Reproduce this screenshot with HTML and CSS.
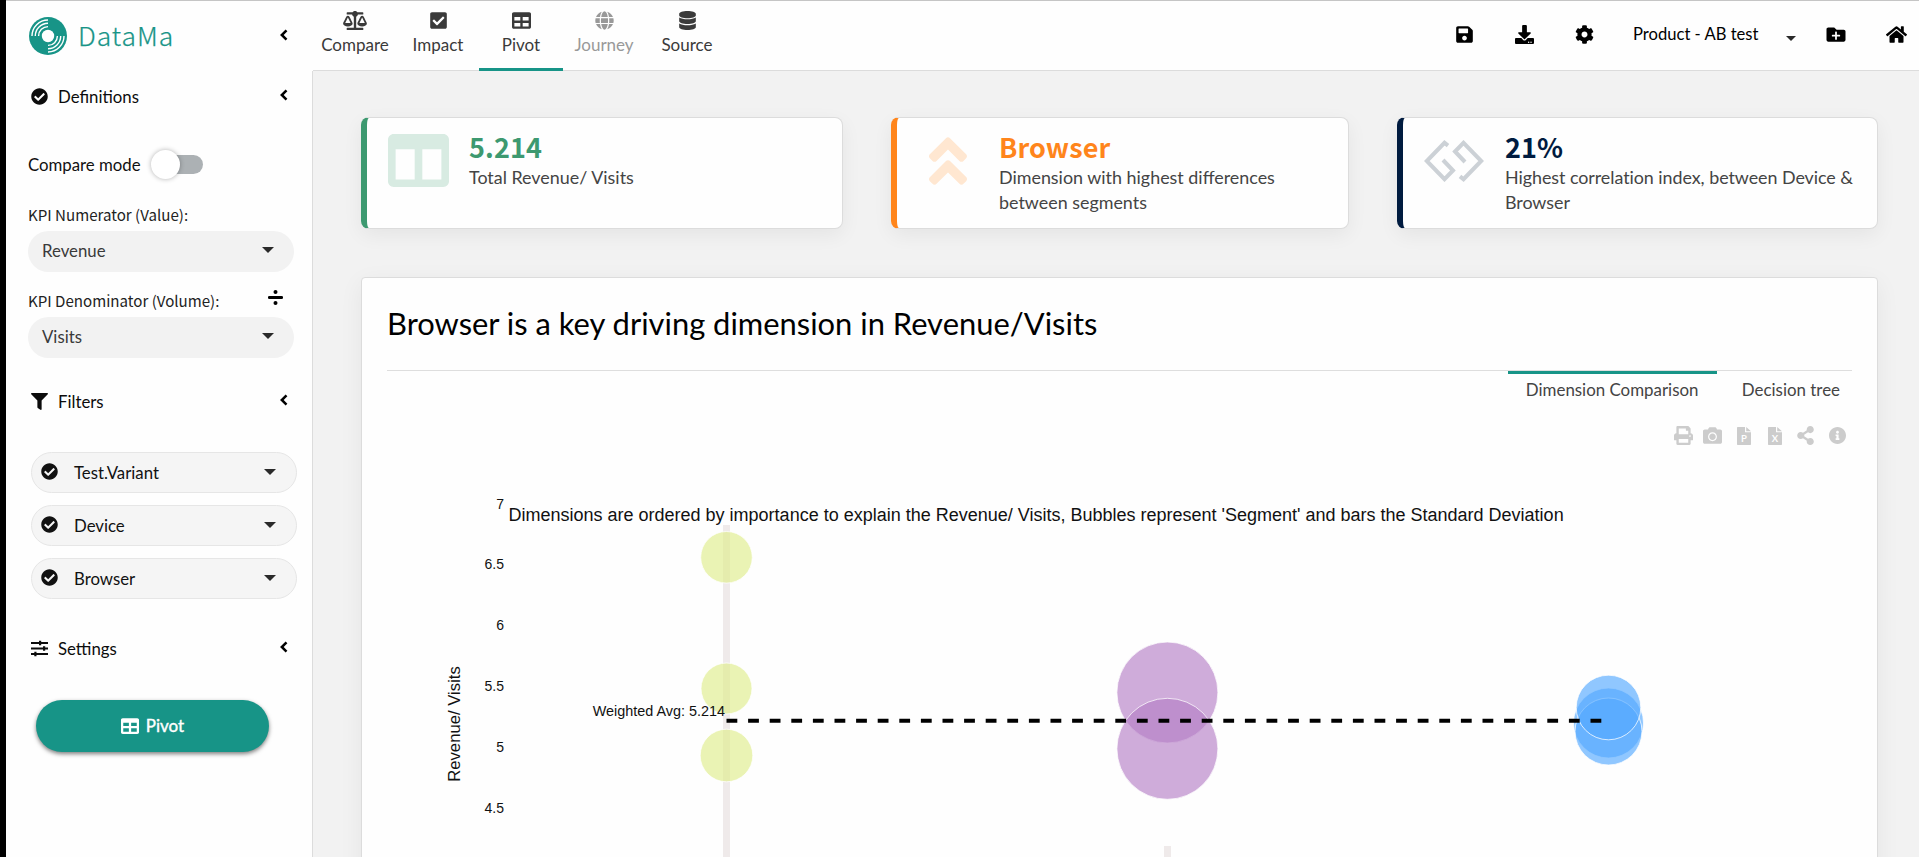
FILE: index.html
```html
<!DOCTYPE html>
<html lang="en">
<head>
<meta charset="utf-8">
<title>DataMa - Pivot</title>
<link rel="stylesheet" href="styles.css">
</head>
<body>
<svg class="sprite" aria-hidden="true">
  <symbol id="check" viewBox="0 0 512 512"><path d="M504 256c0 136.967-111.033 248-248 248S8 392.967 8 256 119.033 8 256 8s248 111.033 248 248zM227.314 387.314l184-184c6.248-6.248 6.248-16.379 0-22.627l-22.627-22.627c-6.248-6.249-16.379-6.249-22.628 0L216 308.118l-70.059-70.059c-6.248-6.248-16.379-6.248-22.628 0l-22.627 22.627c-6.248 6.248-6.248 16.379 0 22.627l104 104c6.249 6.249 16.379 6.249 22.628.001z"/></symbol>
  <symbol id="table" viewBox="0 0 512 512"><path d="M464 32H48C21.49 32 0 53.49 0 80v352c0 26.51 21.49 48 48 48h416c26.51 0 48-21.49 48-48V80c0-26.51-21.49-48-48-48zM224 416H64v-96h160v96zm0-160H64v-96h160v96zm224 160H288v-96h160v96zm0-160H288v-96h160v96z"/></symbol>
  <symbol id="chevron" viewBox="0 0 8 12"><path d="M6.5 1.3L1.8 6l4.7 4.7" fill="none" stroke="currentColor" stroke-width="2.5"/></symbol>
  <symbol id="caret" viewBox="0 0 12 6"><path d="M0 0h12L6 6z"/></symbol>
</svg>

<div class="app">
  <aside class="sidebar">
    <div class="brand">
      <svg class="logo" viewBox="0 0 38 38">
        <circle cx="19" cy="19" r="19" fill="#179487"/>
        <circle cx="19" cy="19" r="6.2" fill="#fff"/>
        <g fill="none" stroke="#fff" stroke-width="1.4">
          <path d="M9.6 19A9.4 9.4 0 0 1 19 9.6M6.3 19A12.7 12.7 0 0 1 19 6.3M3 19A16 16 0 0 1 19 3"/>
          <path d="M28.4 19A9.4 9.4 0 0 1 19 28.4M31.7 19A12.7 12.7 0 0 1 19 31.7M35 19A16 16 0 0 1 19 35"/>
        </g>
      </svg>
      <span class="brand-name">DataMa</span>
      <svg class="chev"><use href="#chevron"/></svg>
    </div>

    <div class="section definitions">
      <svg class="ico"><use href="#check"/></svg><span>Definitions</span>
      <svg class="chev"><use href="#chevron"/></svg>
    </div>
    <div class="switch-row"><span>Compare mode</span><span class="switch"><i class="knob"></i></span></div>
    <div class="label">KPI Numerator (Value):</div>
    <div class="select"><span>Revenue</span><svg class="caret"><use href="#caret"/></svg></div>
    <div class="label second"><span>KPI Denominator (Volume):</span>
      <svg class="divide" viewBox="0 0 15 15"><rect y="6" width="15" height="3" rx="1.3"/><circle cx="7.5" cy="2" r="2"/><circle cx="7.5" cy="13" r="2"/></svg>
    </div>
    <div class="select"><span>Visits</span><svg class="caret"><use href="#caret"/></svg></div>

    <div class="section filters">
      <svg class="ico" viewBox="0 0 512 512"><path d="M487.976 0H24.028C2.71 0-8.047 25.866 7.058 40.971L192 225.941V432c0 7.831 3.821 15.17 10.237 19.662l80 55.98C298.02 518.69 320 507.493 320 487.98V225.941l184.947-184.97C520.021 25.896 509.338 0 487.976 0z"/></svg><span>Filters</span>
      <svg class="chev"><use href="#chevron"/></svg>
    </div>
    <div class="pills">
      <div class="pill"><svg class="ico"><use href="#check"/></svg><span>Test.Variant</span><svg class="caret"><use href="#caret"/></svg></div>
      <div class="pill"><svg class="ico"><use href="#check"/></svg><span>Device</span><svg class="caret"><use href="#caret"/></svg></div>
      <div class="pill"><svg class="ico"><use href="#check"/></svg><span>Browser</span><svg class="caret"><use href="#caret"/></svg></div>
    </div>

    <div class="section settings">
      <svg class="ico" viewBox="0 0 17 17"><path d="M0 2h17v2H0zM0 7.5h17v2H0zM0 13h17v2H0zM8 .8h2.2v4.4H8zM12 6.3h2.2v4.4H12zM3.3 11.8h2.2v4.4H3.3z"/></svg><span>Settings</span>
      <svg class="chev"><use href="#chevron"/></svg>
    </div>
    <button class="run"><svg class="run-ico"><use href="#table"/></svg><span>Pivot</span></button>
  </aside>

  <div class="page">
    <header class="topbar">
      <nav class="nav">
        <a class="tab"><svg viewBox="0 0 640 512" class="n24"><path d="M256 336h-.02c0-16.18 1.34-8.73-85.05-181.51-17.65-35.29-68.19-35.36-85.87 0C-2.06 328.75.02 320.33.02 336H0c0 44.18 57.31 80 128 80s128-35.82 128-80zM128 176l72 144H56l72-144zm511.98 160c0-16.18 1.34-8.73-85.05-181.51-17.65-35.29-68.19-35.36-85.87 0-87.12 174.26-85.04 165.84-85.04 181.51H384c0 44.18 57.31 80 128 80s128-35.82 128-80h-.02zM440 320l72-144 72 144H440zm88 128H352V153.25c23.51-10.29 41.16-31.48 46.39-57.25H528c8.84 0 16-7.16 16-16V48c0-8.84-7.16-16-16-16H383.64C369.04 12.68 346.09 0 320 0s-49.04 12.68-63.64 32H112c-8.84 0-16 7.16-16 16v32c0 8.84 7.16 16 16 16h129.61c5.23 25.76 22.87 46.96 46.39 57.25V448H112c-8.84 0-16 7.16-16 16v32c0 8.84 7.16 16 16 16h416c8.84 0 16-7.16 16-16v-32c0-8.84-7.16-16-16-16z"/></svg><span>Compare</span></a>
        <a class="tab"><svg viewBox="0 0 448 512" class="n17"><path d="M400 480H48c-26.51 0-48-21.49-48-48V80c0-26.51 21.49-48 48-48h352c26.51 0 48 21.49 48 48v352c0 26.51-21.49 48-48 48zm-204.686-98.059l184-184c6.248-6.248 6.248-16.379 0-22.627l-22.627-22.627c-6.248-6.248-16.379-6.249-22.628 0L184 302.745l-70.059-70.059c-6.248-6.248-16.379-6.248-22.628 0l-22.627 22.627c-6.248 6.248-6.248 16.379 0 22.627l104 104c6.249 6.25 16.379 6.25 22.628.001z"/></svg><span>Impact</span></a>
        <a class="tab active"><svg class="n19"><use href="#table"/></svg><span>Pivot</span></a>
        <a class="tab muted"><svg viewBox="0 0 496 512" class="n19"><path d="M336.5 160C322 70.7 287.8 8 248 8s-74 62.7-88.5 152h177zM152 256c0 22.2 1.2 43.5 3.3 64h185.3c2.1-20.5 3.3-41.8 3.3-64s-1.2-43.5-3.3-64H155.3c-2.1 20.5-3.3 41.8-3.3 64zm324.7-96c-28.6-67.9-86.5-120.4-158-141.6 24.4 33.8 41.2 84.7 50 141.6h108zM177.2 18.4C105.8 39.6 47.8 92.1 19.3 160h108c8.7-56.9 25.5-107.8 49.9-141.6zM487.4 192H372.7c2.1 21 3.3 42.5 3.3 64s-1.2 43-3.3 64h114.6c5.5-20.5 8.6-41.8 8.6-64s-3.1-43.5-8.5-64zM120 256c0-21.5 1.2-43 3.3-64H8.6C3.2 212.5 0 233.8 0 256s3.2 43.5 8.6 64h114.6c-2-21-3.2-42.5-3.2-64zm39.5 96c14.5 89.3 48.7 152 88.5 152s74-62.7 88.5-152h-177zm159.3 141.6c71.4-21.2 129.4-73.7 158-141.6h-108c-8.8 56.9-25.6 107.8-50 141.6zM19.3 352c28.6 67.9 86.5 120.4 158 141.6-24.4-33.8-41.2-84.7-50-141.6h-108z"/></svg><span>Journey</span></a>
        <a class="tab"><svg viewBox="0 0 448 512" class="n17"><path d="M448 73.143v45.714C448 159.143 347.667 192 224 192S0 159.143 0 118.857V73.143C0 32.857 100.333 0 224 0s224 32.857 224 73.143zM448 176v102.857C448 319.143 347.667 352 224 352S0 319.143 0 278.857V176c48.125 33.143 136.208 48.572 224 48.572S399.874 209.143 448 176zm0 160v102.857C448 479.143 347.667 512 224 512S0 479.143 0 438.857V336c48.125 33.143 136.208 48.572 224 48.572S399.874 369.143 448 336z"/></svg><span>Source</span></a>
      </nav>
      <div class="tools">
        <svg class="t-save" viewBox="0 0 448 512"><path d="M433.941 129.941l-83.882-83.882A48 48 0 0 0 316.118 32H48C21.49 32 0 53.49 0 80v352c0 26.51 21.49 48 48 48h352c26.51 0 48-21.49 48-48V163.882a48 48 0 0 0-14.059-33.941zM224 416c-35.346 0-64-28.654-64-64 0-35.346 28.654-64 64-64s64 28.654 64 64c0 35.346-28.654 64-64 64zm96-304.52V212c0 6.627-5.373 12-12 12H76c-6.627 0-12-5.373-12-12V108c0-6.627 5.373-12 12-12h228.52c3.183 0 6.235 1.264 8.485 3.515l3.48 3.48A11.996 11.996 0 0 1 320 111.48z"/></svg>
        <svg class="t-down" viewBox="0 0 512 512"><path d="M216 0h80c13.3 0 24 10.7 24 24v168h87.7c17.8 0 26.7 21.5 14.1 34.1L269.7 378.3c-7.5 7.5-19.8 7.5-27.3 0L90.1 226.1c-12.6-12.6-3.7-34.1 14.1-34.1H192V24c0-13.3 10.7-24 24-24zm296 376v112c0 13.3-10.7 24-24 24H24c-13.3 0-24-10.7-24-24V376c0-13.3 10.7-24 24-24h146.7l49 49c20.1 20.1 52.5 20.1 72.6 0l49-49H488c13.3 0 24 10.7 24 24zm-124 88c0-11-9-20-20-20s-20 9-20 20 9 20 20 20 20-9 20-20zm64 0c0-11-9-20-20-20s-20 9-20 20 9 20 20 20 20-9 20-20z"/></svg>
        <svg class="t-cog" viewBox="0 0 512 512"><path d="M487.4 315.7l-42.6-24.6c4.3-23.2 4.3-47 0-70.2l42.6-24.6c4.9-2.8 7.1-8.6 5.5-14-11.1-35.6-30-67.8-54.7-94.6-3.8-4.1-10-5.1-14.8-2.3L380.8 110c-17.9-15.4-38.5-27.3-60.8-35.1V25.8c0-5.6-3.9-10.5-9.4-11.7-36.7-8.2-74.3-7.8-109.2 0-5.5 1.2-9.4 6.1-9.4 11.7V75c-22.2 7.9-42.8 19.8-60.8 35.1L88.7 85.5c-4.9-2.8-11-1.9-14.8 2.3-24.7 26.7-43.6 58.9-54.7 94.6-1.7 5.4.6 11.2 5.5 14L67.3 221c-4.3 23.2-4.3 47 0 70.2l-42.6 24.6c-4.9 2.8-7.1 8.6-5.5 14 11.1 35.6 30 67.8 54.7 94.6 3.8 4.1 10 5.1 14.8 2.3l42.6-24.6c17.9 15.4 38.5 27.3 60.8 35.1v49.2c0 5.6 3.9 10.5 9.4 11.7 36.7 8.2 74.3 7.8 109.2 0 5.5-1.2 9.4-6.1 9.4-11.7v-49.2c22.2-7.9 42.8-19.8 60.8-35.1l42.6 24.6c4.9 2.8 11 1.9 14.8-2.3 24.7-26.7 43.6-58.9 54.7-94.6 1.5-5.5-.7-11.3-5.6-14.1zM256 336c-44.1 0-80-35.9-80-80s35.9-80 80-80 80 35.9 80 80-35.9 80-80 80z"/></svg>
        <div class="project"><span>Product - AB test</span><svg class="t-caret"><use href="#caret"/></svg></div>
        <svg class="t-folder" viewBox="0 0 512 512"><path d="M464 128H272l-64-64H48C21.49 64 0 85.49 0 112v288c0 26.51 21.49 48 48 48h416c26.51 0 48-21.49 48-48V176c0-26.51-21.49-48-48-48zm-96 168c0 8.84-7.16 16-16 16h-72v72c0 8.84-7.16 16-16 16h-16c-8.84 0-16-7.16-16-16v-72h-72c-8.84 0-16-7.16-16-16v-16c0-8.84 7.16-16 16-16h72v-72c0-8.84 7.16-16 16-16h16c8.84 0 16 7.16 16 16v72h72c8.84 0 16 7.16 16 16v16z"/></svg>
        <svg class="t-home" viewBox="0 0 576 512"><path d="M280.37 148.26L96 300.11V464a16 16 0 0 0 16 16l112.06-.29a16 16 0 0 0 15.92-16V368a16 16 0 0 1 16-16h64a16 16 0 0 1 16 16v95.64a16 16 0 0 0 16 16.05L464 480a16 16 0 0 0 16-16V300L295.67 148.26a12.19 12.19 0 0 0-15.3 0zM571.6 251.47L488 182.56V44.05a12 12 0 0 0-12-12h-56a12 12 0 0 0-12 12v72.61L318.47 43a48 48 0 0 0-61 0L4.34 251.47a12 12 0 0 0-1.6 16.9l25.5 31A12 12 0 0 0 45.15 301l235.22-193.74a12.19 12.19 0 0 1 15.3 0L530.9 301a12 12 0 0 0 16.9-1.6l25.5-31a12 12 0 0 0-1.7-16.93z"/></svg>
      </div>
    </header>

    <main class="content">
      <div class="cards">
        <section class="card green">
          <div class="card-ico"><svg class="i-cols" viewBox="0 32 512 448" preserveAspectRatio="none"><path d="M464 32H48C21.49 32 0 53.49 0 80v352c0 26.51 21.49 48 48 48h416c26.51 0 48-21.49 48-48V80c0-26.51-21.49-48-48-48zM224 416H64V160h160v256zm224 0H288V160h160v256z"/></svg></div>
          <div class="card-text"><h2>5.214</h2><p>Total Revenue/ Visits</p></div>
        </section>
        <section class="card orange">
          <div class="card-ico"><svg class="i-up" viewBox="0 56 320 400"><path d="M177 255.7l136 136c9.4 9.4 9.4 24.6 0 33.9l-22.6 22.6c-9.4 9.4-24.6 9.4-33.9 0L160 351.9l-96.4 96.4c-9.4 9.4-24.6 9.4-33.9 0L7 425.7c-9.4-9.4-9.4-24.6 0-33.9l136-136c9.4-9.5 24.6-9.5 34-.1zm-34-192L7 199.7c-9.4 9.4-9.4 24.6 0 33.9l22.6 22.6c9.4 9.4 24.6 9.4 33.9 0l96.4-96.4 96.4 96.4c9.4 9.4 24.6 9.4 33.9 0l22.6-22.6c9.4-9.4 9.4-24.6 0-33.9l-136-136c-9.2-9.4-24.4-9.4-33.8 0z"/></svg></div>
          <div class="card-text"><h2>Browser</h2><p>Dimension with highest differences<br>between segments</p></div>
        </section>
        <section class="card navy">
          <div class="card-ico"><svg class="i-link" viewBox="0 0 60 42"><g fill="none" stroke="currentColor" stroke-width="4"><path d="M24 5.6L20.5 2.8 2.8 21l17.7 18.2L29 30.5 19 20"/><path d="M36 36.4l3.5 2.8L57.2 21 39.5 2.8 31 11.5 41 22"/></g></svg></div>
          <div class="card-text"><h2>21%</h2><p>Highest correlation index, between Device &amp;<br>Browser</p></div>
        </section>
      </div>

      <section class="panel">
        <h1>Browser is a key driving dimension in Revenue/Visits</h1>
        <div class="views">
          <a class="view on">Dimension Comparison</a>
          <a class="view">Decision tree</a>
        </div>
        <div class="exports">
          <svg class="e1" viewBox="0 0 512 512"><path d="M448 192V77.25c0-8.49-3.37-16.62-9.37-22.63L393.37 9.37c-6-6-14.14-9.37-22.63-9.37H96C78.33 0 64 14.33 64 32v160c-35.35 0-64 28.65-64 64v112c0 8.84 7.16 16 16 16h48v96c0 17.67 14.33 32 32 32h320c17.67 0 32-14.33 32-32v-96h48c8.84 0 16-7.16 16-16V256c0-35.35-28.65-64-64-64zm-64 256H128v-96h256v96zm0-224H128V64h192v48c0 8.84 7.16 16 16 16h48v96zm48 72c-13.25 0-24-10.75-24-24 0-13.26 10.75-24 24-24s24 10.74 24 24c0 13.25-10.75 24-24 24z"/></svg>
          <svg class="e2" viewBox="0 0 512 512"><path d="M512 144v288c0 26.5-21.5 48-48 48H48c-26.5 0-48-21.5-48-48V144c0-26.5 21.5-48 48-48h88l12.3-32.9c7-18.7 24.9-31.1 44.9-31.1h125.5c20 0 37.9 12.4 44.9 31.1L376 96h88c26.5 0 48 21.5 48 48zM376 288c0-66.2-53.8-120-120-120s-120 53.8-120 120 53.8 120 120 120 120-53.8 120-120zm-32 0c0 48.5-39.5 88-88 88s-88-39.5-88-88 39.5-88 88-88 88 39.5 88 88z"/></svg>
          <svg class="e3" viewBox="0 0 14 18"><path d="M.7 0H8v5.2h6v12.1a.7.7 0 0 1-.7.7H.7a.7.7 0 0 1-.7-.7V.7A.7.7 0 0 1 .7 0zM9.2 0L14 4.3H9.2z"/><text x="7" y="14.8" text-anchor="middle">P</text></svg>
          <svg class="e4" viewBox="0 0 14 18"><path d="M.7 0H8v5.2h6v12.1a.7.7 0 0 1-.7.7H.7a.7.7 0 0 1-.7-.7V.7A.7.7 0 0 1 .7 0zM9.2 0L14 4.3H9.2z"/><text x="7" y="14.8" text-anchor="middle">X</text></svg>
          <svg class="e5" viewBox="0 0 448 512"><path d="M352 320c-22.608 0-43.387 7.819-59.79 20.895l-102.486-64.054a96.551 96.551 0 0 0 0-41.683l102.486-64.054C308.613 184.181 329.392 192 352 192c53.019 0 96-42.981 96-96S405.019 0 352 0s-96 42.981-96 96c0 7.158.79 14.13 2.276 20.841L155.79 180.895C139.387 167.819 118.608 160 96 160c-53.019 0-96 42.981-96 96s42.981 96 96 96c22.608 0 43.387-7.819 59.79-20.895l102.486 64.054A96.301 96.301 0 0 0 256 416c0 53.019 42.981 96 96 96s96-42.981 96-96-42.981-96-96-96z"/></svg>
          <svg class="e6" viewBox="8 8 496 496"><path d="M256 8C119.043 8 8 119.083 8 256c0 136.997 111.043 248 248 248s248-111.003 248-248C504 119.083 392.957 8 256 8zm0 110c23.196 0 42 18.804 42 42s-18.804 42-42 42-42-18.804-42-42 18.804-42 42-42zm56 254c0 6.627-5.373 12-12 12h-88c-6.627 0-12-5.373-12-12v-24c0-6.627 5.373-12 12-12h12v-64h-12c-6.627 0-12-5.373-12-12v-24c0-6.627 5.373-12 12-12h64c6.627 0 12 5.373 12 12v100h12c6.627 0 12 5.373 12 12v24z"/></svg>
        </div>
        <svg class="chart" viewBox="387 457 1466 400">
          <g class="bars"><rect x="723" y="525" width="7" height="332"/><rect x="1164" y="846" width="7" height="11"/></g>
          <g class="ticks"><text x="504" y="508.500">7</text><text x="504" y="568.500">6.5</text><text x="504" y="629.500">6</text><text x="504" y="690.500">5.5</text><text x="504" y="751.500">5</text><text x="504" y="812.500">4.5</text></g>
          <text class="axis" transform="translate(460 724) rotate(-90)">Revenue/ Visits</text>
          <g class="bubbles">
            <g fill="#dfed8c"><circle cx="726.5" cy="557.3" r="25.8"/><circle cx="726.5" cy="688.5" r="25.5"/><circle cx="726.5" cy="755.5" r="26.3"/></g>
            <g fill="#b680c6"><circle cx="1167.4" cy="692.5" r="50.5"/><circle cx="1167.4" cy="748.8" r="50.5"/></g>
            <g fill="#55a9ff"><circle cx="1608.5" cy="723" r="35"/><circle cx="1608.5" cy="731.5" r="33.5"/><circle cx="1608.5" cy="707.5" r="32.3"/></g>
          </g>
          <path class="avg" d="M726.5 720.8H1608"/>
          <text class="avg-label" x="725" y="715.500">Weighted Avg: 5.214</text>
          <text class="title" x="508.500" y="520.500">Dimensions are ordered by importance to explain the Revenue/ Visits, Bubbles represent 'Segment' and bars the Standard Deviation</text>
        </svg>
      </section>
    </main>
  </div>
</div>
</body>
</html>
```
FILE: styles.css
```css
* { box-sizing: border-box; }
body { margin: 0; background: #000; font-family: Lato, "Open Sans", sans-serif; font-size: 16.8px; color: #111; }
h1, h2, p { margin: 0; font-weight: 400; }
svg { display: block; flex: none; fill: currentColor; }
.sprite { position: absolute; width: 0; height: 0; }
.app { display: flex; height: 857px; overflow: hidden; padding-left: 6px; }

.sidebar { width: 307px; height: 857px; flex: none; background: #fefefe; border-top: 1px solid #c5c5c5; padding-left: 22px; background-image: linear-gradient(#dcdcdc, #dcdcdc); background-repeat: no-repeat; background-position: 306px 70px; background-size: 1px 800px; }
.brand { display: flex; align-items: center; height: 69px; padding: 1px 25px 0 1px; }
.logo { width: 38px; height: 38px; }
.brand-name { margin: -2px 0 0 11px; font: 300 26.4px/34px "Noto Sans CJK SC", sans-serif; color: #179487; letter-spacing: 1px; -webkit-text-stroke: .25px #179487; }
.chev { width: 8px; height: 12px; margin: -2px 0 0 auto; color: #000; }
.section { display: flex; align-items: center; height: 54px; padding: 0 25px 0 3px; color: #0c0c0c; }
.definitions { height: 52px; }
.ico { width: 17px; height: 17px; margin-right: 10px; }
.switch-row { display: flex; align-items: center; height: 44px; margin-top: 20px; }
.switch { display: flex; align-items: center; width: 48px; height: 19px; margin-left: 14px; border-radius: 10px; background: #acb1b4; }
.knob { width: 29px; height: 29px; margin-left: -4px; border-radius: 50%; background: #fff; box-shadow: 0 0 5px rgba(0, 0, 0, .3); flex: none; }
.label { display: flex; align-items: center; height: 35px; margin-top: 10px; font: 400 15.1px/20px "Noto Sans CJK SC", sans-serif; color: #222; }
.label.second { padding-right: 24px; }
.divide { width: 15px; height: 15px; margin: -5px 6px 0 auto; color: #000; }
.select { display: flex; align-items: center; width: 266px; height: 41px; padding: 0 20px 3px 14px; border-radius: 21px; background: #f2f2f2; color: #3a3a3a; }
.caret { width: 12px; height: 6px; margin-left: auto; color: #2a2a2a; }
.filters { margin-top: 16px; }
.pills { display: grid; gap: 12px; margin: 24px 0 0 3px; }
.pill { display: flex; align-items: center; width: 266px; height: 41px; padding: 0 20px 0 9px; border: 1px solid #e6e6e6; border-radius: 21px; background: #f5f5f5; }
.pill .ico { margin-right: 16px; }
.pill .caret, .pill .ico { margin-top: -2px; }
.settings { margin-top: 22px; }
.run { display: flex; align-items: center; justify-content: center; gap: 7px; width: 233px; height: 52px; margin: 25px 0 0 8px; padding: 0 0 1px; border: 0; border-radius: 26px; background: #179487; color: #fff; font: 400 17px Lato, sans-serif; -webkit-text-stroke: .4px #fff; box-shadow: 0 2px 4px rgba(0, 0, 0, .5); }
.run-ico { width: 18px; height: 18px; }

.page { flex: 1; min-width: 0; background: #f2f2f2; }
.topbar { display: flex; justify-content: space-between; height: 71px; background: #fefefe; border-top: 1px solid #c5c5c5; border-bottom: 1px solid #dcdcdc; }
.nav { display: flex; font-size: 17px; }
.tab { display: flex; flex-direction: column; align-items: center; width: 83px; height: 70px; padding: 10px 0 0 1px; color: #3a3a3a; line-height: 24px; gap: 3px; }
.tab svg { height: 19px; }
.n24 { width: 24px; } .n17 { width: 17px; } .n19 { width: 19px; }
.tab.active { width: 84px; margin-right: -1px; padding-left: 0; border-bottom: 3px solid #179487; }
.tab.muted { color: #999; }
.tools { display: flex; align-items: center; padding: 0 12px 3px 0; color: #000; }
.tools svg { height: 19px; }
.t-save { width: 17px; }
.t-down { width: 19px; margin-left: 42px; }
.t-cog { width: 19px; margin-left: 41px; }
.project { display: flex; align-items: center; justify-content: space-between; width: 163px; margin-left: 39px; }
.project span { font-size: 16.6px; }
.project .t-caret { width: 10px; height: 5px; margin-top: 8px; color: #2a2a2a; }
.t-folder { width: 20px; margin-left: 30px; }
.t-home { width: 21px; margin-left: 40px; }

.content { padding: 46px 41px 0 48px; }
.cards { display: grid; grid-template-columns: 482px 458px 481px; justify-content: space-between; }
.card { display: flex; height: 112px; padding: 16px 20px 0 21px; background: #fefefe; border: 1px solid #dcdcdc; border-left: 6px solid; border-radius: 8px; box-shadow: 0 6px 20px rgba(0, 0, 0, .06); }
.green { border-left-color: #3d9970; } .orange { border-left-color: #ff851b; } .navy { border-left-color: #001b3f; }
.card-ico { width: 61px; margin-right: 20px; }
.i-cols { width: 61px; height: 53px; color: #d8ebe2; }
.i-up { width: 38px; height: 48px; margin: 3px 0 0 11px; color: #ffe7d1; }
.i-link { width: 60px; height: 42px; margin-top: 6px; color: #ccd1d6; }
.card-text p { font-size: 17.9px; line-height: 25px; color: #444; white-space: nowrap; }
h2 { font: 700 27px/29px "Noto Sans CJK SC", sans-serif; letter-spacing: .1px; margin: -2px 0 4px; }
.green h2 { color: #3d9970; } .orange h2 { color: #ff851b; } .navy h2 { color: #001b3f; }
.navy p { letter-spacing: -.05px; }

.panel { margin-top: 48px; height: 620px; padding: 0 25px; background: #fefefe; border: 1px solid #dcdcdc; border-radius: 4px; box-shadow: 0 6px 24px rgba(0, 0, 0, .06); }
h1 { height: 93px; padding-top: 26px; font-size: 30.9px; line-height: 40px; color: #000; border-bottom: 1px solid #dedede; }
.views { display: flex; justify-content: flex-end; height: 40px; color: #444; font-size: 16.9px; }
.view { display: flex; padding: 4px 12px 0; border-top: 3px solid transparent; line-height: 24px; }
.view.on { width: 209px; padding-left: 18px; border-color: #179487; margin-right: 13px; }
.exports { display: flex; align-items: center; justify-content: flex-end; height: 46px; padding: 3px 6px 0 0; color: #ccc; }
.e1, .e2, .e5 { height: 19px; } .e1, .e2 { width: 19px; }
.e2 { margin-left: 10px; }
.e3, .e4 { width: 14px; height: 18px; } .e3 { margin-left: 15px; } .e4 { margin-left: 17px; }
.exports text { font: 700 9.5px Lato, sans-serif; fill: #fefefe; }
.e5 { width: 17px; margin-left: 15px; }
.e6 { width: 17px; height: 17px; margin-left: 15px; }

.chart { width: 1466px; height: 400px; font-family: "Liberation Sans", Arial, sans-serif; fill: #111; }
.ticks { font-size: 14px; text-anchor: end; }
.bars { fill: #efeaea; }
.axis { font-size: 16.7px; text-anchor: middle; }
.bubbles { fill-opacity: .65; stroke: #fff; stroke-opacity: .75; stroke-width: 1; }
.avg { fill: none; stroke: #000; stroke-width: 4; stroke-dasharray: 10.8 10.8; }
.avg-label { font-size: 14.4px; text-anchor: end; }
.title { font-size: 18px; }
```
